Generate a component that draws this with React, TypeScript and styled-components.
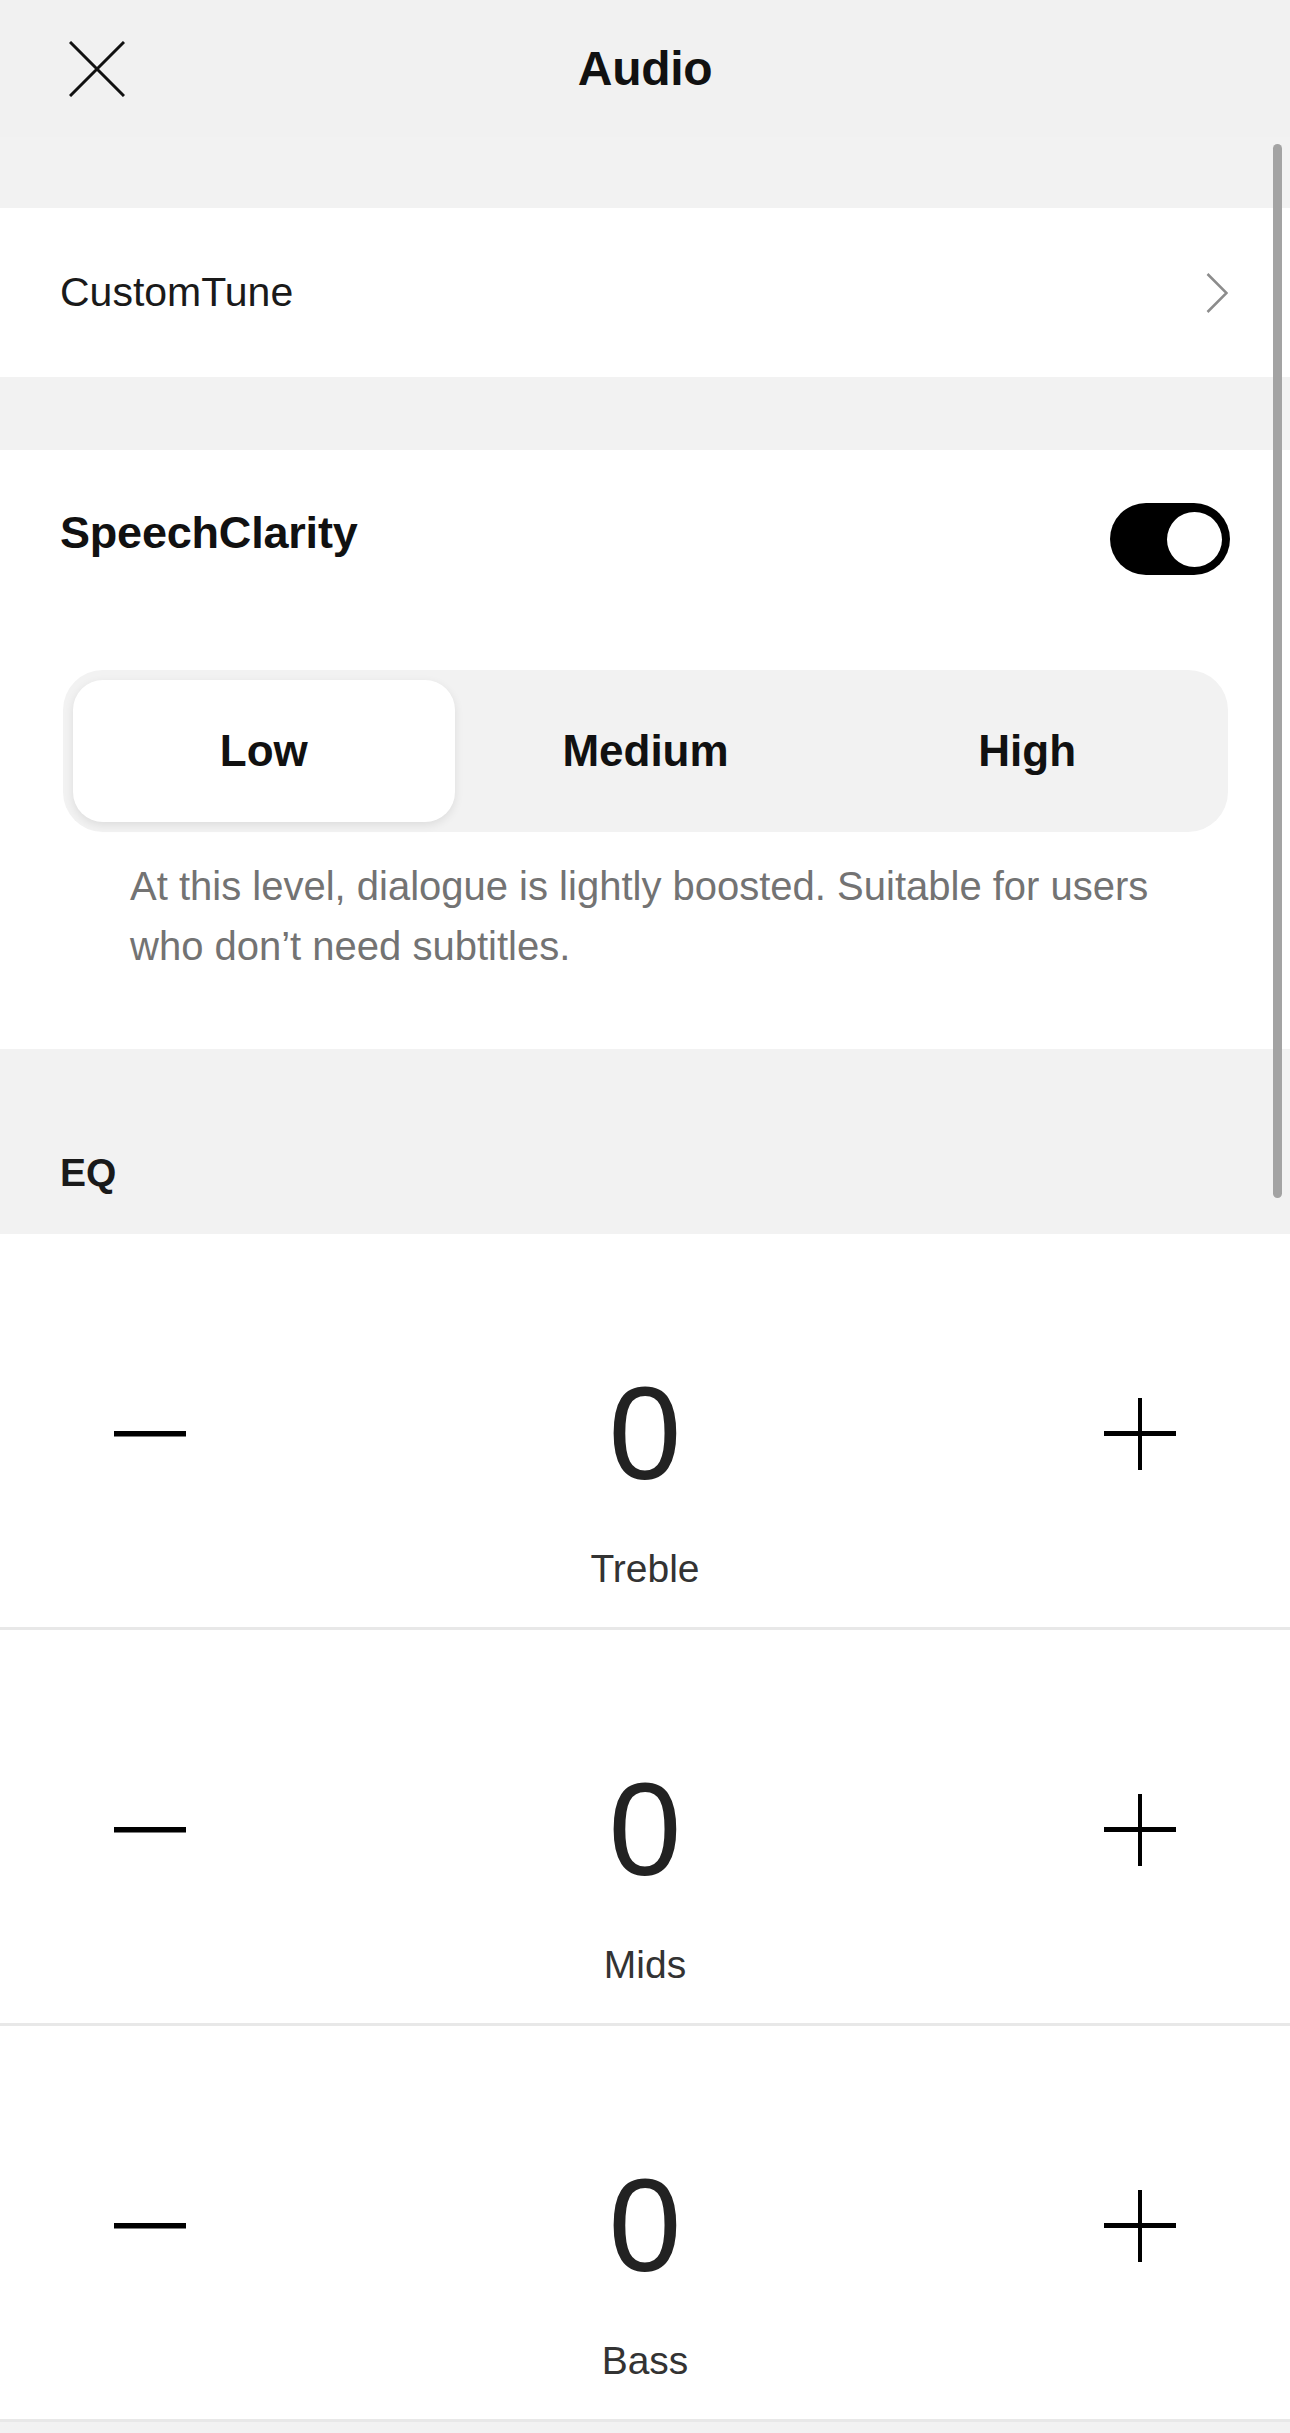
import React, { useState } from 'react';
import styled, { createGlobalStyle } from 'styled-components';

const GlobalStyle = createGlobalStyle`
  html, body {
    margin: 0;
    padding: 0;
    background: #f2f2f2;
  }
  body {
    font-family: 'Liberation Sans', Arial, sans-serif;
    color: #111111;
  }
`;

const Page = styled.div`
  position: relative;
  width: 1290px;
  min-height: 2433px;
  background: #f2f2f2;
`;

const Header = styled.header`
  height: 137px;
  display: flex;
  align-items: center;
  justify-content: center;
  position: relative;
  background: #f1f1f1;
`;

const CloseButton = styled.button`
  position: absolute;
  left: 66px;
  top: 38px;
  width: 62px;
  height: 62px;
  padding: 0;
  border: none;
  background: none;
  display: flex;
  align-items: center;
  justify-content: center;
`;

const Title = styled.h1`
  margin: 0;
  font-size: 48px;
  font-weight: 700;
  letter-spacing: -0.3px;
  color: #111111;
`;

const Gap = styled.div<{ h: number }>`
  height: ${({ h }) => h}px;
`;

const LinkRow = styled.div`
  height: 169px;
  background: #ffffff;
  display: flex;
  align-items: center;
  justify-content: space-between;
  padding: 0 62px 0 60px;
`;

const LinkLabel = styled.span`
  font-size: 41px;
  color: #1a1a1a;
`;

const Card = styled.section`
  background: #ffffff;
  padding: 53px 60px 73px 60px;
`;

const CardHead = styled.div`
  display: flex;
  align-items: center;
  justify-content: space-between;
`;

const CardTitle = styled.h2`
  margin: 0 0 12px 0;
  font-size: 45px;
  font-weight: 700;
  letter-spacing: -0.2px;
  color: #111111;
`;

const Toggle = styled.button<{ on: boolean }>`
  width: 120px;
  height: 72px;
  border-radius: 36px;
  border: none;
  padding: 0 8px;
  display: flex;
  align-items: center;
  justify-content: ${({ on }) => (on ? 'flex-end' : 'flex-start')};
  background: ${({ on }) => (on ? '#000000' : '#cfcfcf')};
`;

const Knob = styled.span`
  width: 55px;
  height: 55px;
  border-radius: 50%;
  background: #ffffff;
`;

const Segmented = styled.div`
  margin: 95px 2px 0 3px;
  padding: 10px;
  height: 142px;
  border-radius: 40px;
  background: #f2f2f2;
  display: grid;
  grid-template-columns: repeat(3, 1fr);
`;

const Segment = styled.button<{ active: boolean }>`
  border: none;
  border-radius: 30px;
  font-family: inherit;
  font-size: 44px;
  font-weight: 700;
  color: #111111;
  background: ${({ active }) => (active ? '#ffffff' : 'transparent')};
  box-shadow: ${({ active }) => (active ? '0 3px 10px rgba(0, 0, 0, 0.09)' : 'none')};
`;

const Hint = styled.p`
  margin: 24px 40px 0 70px;
  font-size: 40px;
  line-height: 60px;
  color: #737373;
`;

const SectionLabel = styled.div`
  height: 185px;
  box-sizing: border-box;
  padding: 100px 60px 0;
  font-size: 39px;
  line-height: 48px;
  font-weight: 700;
  color: #1a1a1a;
`;

const EqRow = styled.div`
  background: #ffffff;
  height: 396px;
  box-sizing: border-box;
  padding-top: 135px;
  border-bottom: 3px solid #e8e8e8;
  &:last-child {
    height: 392px;
    border-bottom: none;
  }
`;

const Controls = styled.div`
  height: 130px;
  padding: 0 114px;
  display: flex;
  align-items: center;
  justify-content: space-between;
`;

const StepButton = styled.button`
  width: 72px;
  height: 72px;
  padding: 0;
  border: none;
  background: none;
  display: flex;
  align-items: center;
  justify-content: center;
`;

const Value = styled.span`
  font-size: 131px;
  line-height: 130px;
  font-weight: 400;
  color: #222222;
`;

const BandName = styled.div`
  margin-top: 46px;
  text-align: center;
  font-size: 39px;
  line-height: 48px;
  color: #333333;
`;

const Scrollbar = styled.div`
  position: absolute;
  left: 1273px;
  top: 144px;
  width: 9px;
  height: 1054px;
  border-radius: 5px;
  background: #a3a3a3;
`;

const CloseIcon = () => (
  <svg width="56" height="56" viewBox="0 0 56 56">
    <path d="M1 1 L55 55 M55 1 L1 55" stroke="#111" strokeWidth="3" fill="none" />
  </svg>
);

const Chevron = () => (
  <svg width="22" height="40" viewBox="0 0 22 40">
    <path d="M1.5 1 L20.5 20 L1.5 39" stroke="#8c8c8c" strokeWidth="2.5" fill="none" />
  </svg>
);

const MinusIcon = () => (
  <svg width="72" height="72" viewBox="0 0 72 72">
    <rect x="0" y="33" width="72" height="5.5" fill="#000" />
  </svg>
);

const PlusIcon = () => (
  <svg width="72" height="72" viewBox="0 0 72 72">
    <rect x="0" y="33" width="72" height="5" fill="#000" />
    <rect x="34" y="0" width="4" height="72" fill="#000" />
  </svg>
);

const levels = ['Low', 'Medium', 'High'];
const bands = ['Treble', 'Mids', 'Bass'];

const App: React.FC = () => {
  const [clarity, setClarity] = useState(true);
  const [level, setLevel] = useState('Low');
  const [eq, setEq] = useState<Record<string, number>>({ Treble: 0, Mids: 0, Bass: 0 });

  const step = (band: string, delta: number) => {
    setEq((prev) => ({ ...prev, [band]: Math.max(-10, Math.min(10, prev[band] + delta)) }));
  };

  return (
    <Page>
      <GlobalStyle />
      <Header>
        <CloseButton aria-label="Close">
          <CloseIcon />
        </CloseButton>
        <Title>Audio</Title>
      </Header>
      <Gap h={71} />
      <LinkRow>
        <LinkLabel>CustomTune</LinkLabel>
        <Chevron />
      </LinkRow>
      <Gap h={73} />
      <Card>
        <CardHead>
          <CardTitle>SpeechClarity</CardTitle>
          <Toggle on={clarity} onClick={() => setClarity(!clarity)} aria-label="SpeechClarity">
            <Knob />
          </Toggle>
        </CardHead>
        <Segmented>
          {levels.map((l) => (
            <Segment key={l} active={level === l} onClick={() => setLevel(l)}>
              {l}
            </Segment>
          ))}
        </Segmented>
        <Hint>At this level, dialogue is lightly boosted. Suitable for users who don’t need subtitles.</Hint>
      </Card>
      <SectionLabel>EQ</SectionLabel>
      {bands.map((band) => (
        <EqRow key={band}>
          <Controls>
            <StepButton aria-label={`Decrease ${band}`} onClick={() => step(band, -1)}>
              <MinusIcon />
            </StepButton>
            <Value>{eq[band]}</Value>
            <StepButton aria-label={`Increase ${band}`} onClick={() => step(band, 1)}>
              <PlusIcon />
            </StepButton>
          </Controls>
          <BandName>{band}</BandName>
        </EqRow>
      ))}
      <Scrollbar />
    </Page>
  );
};

export default App;
